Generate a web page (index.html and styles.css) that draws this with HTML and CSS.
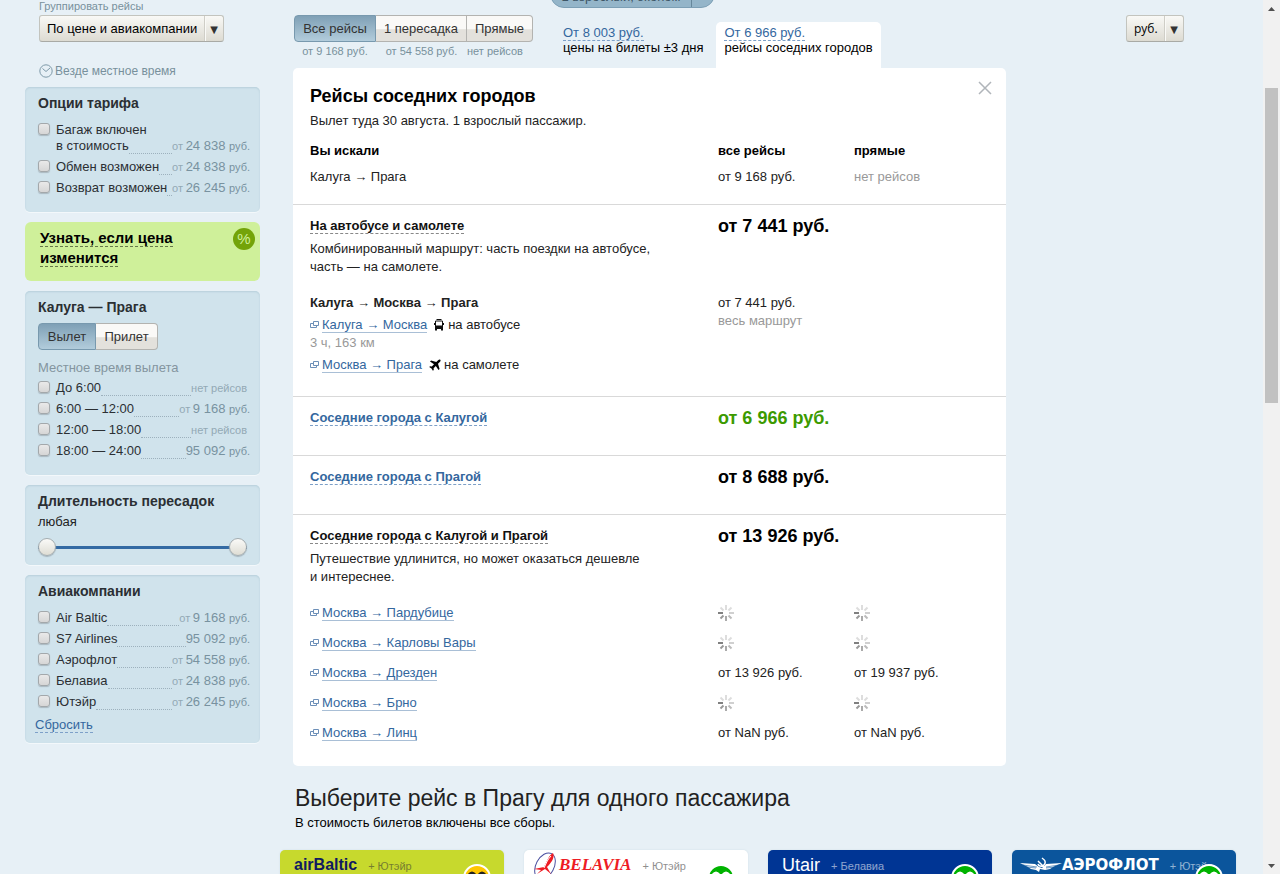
FILE: index.html
```html
<!DOCTYPE html>
<html lang="ru">
<head>
<meta charset="utf-8">
<title>Рейсы Калуга — Прага</title>
<link rel="stylesheet" href="styles.css">
</head>
<body>
<svg class="defs" aria-hidden="true">
  <symbol id="popup" viewBox="0 0 9 7"><path d="M3.5.5h5v4h-5zM3.5 2.5h-3v4h6v-2" fill="none" stroke="#6c8fb8"/></symbol>
  <symbol id="wait" viewBox="0 0 16 16"><g stroke-width="2" fill="none">
    <path d="M0 8h5" stroke="#808080"/><path d="M5.5 10.5 2.5 13.500" stroke="#999"/><path d="M8 11v5" stroke="#aaa"/><path d="m10.500 10.500 3 3" stroke="#bbb"/>
    <path d="M11 8h5" stroke="#d0d0d0"/><path d="m10.500 5.500 3-3" stroke="#ddd"/><path d="M8 5V0" stroke="#ddd"/><path d="m5.500 5.500-3-3" stroke="#ddd"/></g></symbol>
  <symbol id="smile" viewBox="0 0 28 28"><circle cx="14" cy="14" r="13" fill="currentColor" stroke="#fff" stroke-width="2"/><path class="eyes" d="M6 11q3-4 6 0M16 11q3-4 6 0M7 16q7 8 14 0" fill="none" stroke-width="3"/></symbol>
</svg>
<div class="window">
  <div class="page">
    <aside class="sidebar">
      <label class="group-label" for="group">Группировать рейсы</label>
      <span class="drop group-drop"><select id="group"><option>По цене и авиакомпании</option></select><i>▼</i></span>
      <div class="local"><svg width="14" height="14" viewBox="0 0 14 14" fill="none" stroke="#7d99a8"><circle cx="7" cy="7" r="6.200"/><path d="m3.500 4.500 3.500 3 4-3.500"/></svg>Везде местное время</div>

      <section class="box">
        <h3>Опции тарифа</h3>
        <div class="rows">
          <label class="row two-line"><input type="checkbox"><span class="line1">Багаж включен</span><span class="line2">в стоимость</span><b></b><span class="sum"><small>от</small> 24 838 <em>руб.</em></span></label>
          <label class="row"><input type="checkbox"><span>Обмен возможен</span><b></b><span class="sum"><small>от</small> 24 838 <em>руб.</em></span></label>
          <label class="row"><input type="checkbox"><span>Возврат возможен</span><b></b><span class="sum"><small>от</small> 26 245 <em>руб.</em></span></label>
        </div>
      </section>

      <section class="notify"><span><a href="#">Узнать, если цена<br>изменится</a></span><span class="percent">%</span></section>

      <section class="box">
        <h3>Калуга — Прага</h3>
        <div class="seg seg-time"><button type="button" class="on">Вылет</button><button type="button">Прилет</button></div>
        <p class="hint">Местное время вылета</p>
        <div class="rows rows-tight">
          <label class="row"><input type="checkbox"><span>До 6:00</span><b></b><span class="none">нет рейсов</span></label>
          <label class="row"><input type="checkbox"><span>6:00 — 12:00</span><b></b><span class="sum"><small>от</small> 9 168 <em>руб.</em></span></label>
          <label class="row"><input type="checkbox"><span>12:00 — 18:00</span><b></b><span class="none">нет рейсов</span></label>
          <label class="row"><input type="checkbox"><span>18:00 — 24:00</span><b></b><span class="sum">95 092 <em>руб.</em></span></label>
        </div>
      </section>

      <section class="box box-range">
        <h3>Длительность пересадок</h3>
        <p class="any">любая</p>
        <div class="range">
          <input type="range" min="0" max="24" value="0" aria-label="Длительность от">
          <input type="range" min="0" max="24" value="24" aria-label="Длительность до">
        </div>
      </section>

      <section class="box box-air">
        <h3>Авиакомпании</h3>
        <div class="rows">
          <label class="row"><input type="checkbox"><span>Air Baltic</span><b></b><span class="sum"><small>от</small> 9 168 <em>руб.</em></span></label>
          <label class="row"><input type="checkbox"><span>S7 Airlines</span><b></b><span class="sum">95 092 <em>руб.</em></span></label>
          <label class="row"><input type="checkbox"><span>Аэрофлот</span><b></b><span class="sum"><small>от</small> 54 558 <em>руб.</em></span></label>
          <label class="row"><input type="checkbox"><span>Белавиа</span><b></b><span class="sum"><small>от</small> 24 838 <em>руб.</em></span></label>
          <label class="row"><input type="checkbox"><span>Ютэйр</span><b></b><span class="sum"><small>от</small> 26 245 <em>руб.</em></span></label>
        </div>
        <div class="reset"><a class="dash" href="#">Сбросить</a></div>
      </section>
    </aside>

    <main class="main">
      <button type="button" class="pill"><span>1 взрослый, эконом</span><i></i></button>
      <div class="top">
        <div class="stops">
          <div class="seg"><button type="button" class="on">Все рейсы</button><button type="button">1 пересадка</button><button type="button">Прямые</button></div>
          <div class="captions"><span>от 9 168 руб.</span><span>от 54 558 руб.</span><span>нет рейсов</span></div>
        </div>
        <nav class="tabs">
          <div class="tab"><a class="dash" href="#">От 8 003 руб.</a><br>цены на билеты ±3 дня</div>
          <div class="tab active"><a class="dash" href="#">От 6 966 руб.</a><br>рейсы соседних городов</div>
        </nav>
        <span class="drop currency"><select aria-label="Валюта"><option>руб.</option></select><i>▼</i></span>
      </div>

      <div class="panel">
        <button type="button" class="close" aria-label="Закрыть"><svg width="14" height="14" viewBox="0 0 14 14"><path d="m1 1 12 12M13 1 1 13" stroke="#b0b5ba" stroke-width="1.500"/></svg></button>
        <section class="part first">
          <h2>Рейсы соседних городов</h2>
          <p>Вылет туда 30 августа. 1 взрослый пассажир.</p>
          <table class="searched">
            <tr><th>Вы искали</th><th class="c2">все рейсы</th><th class="c3">прямые</th></tr>
            <tr><td>Калуга → Прага</td><td>от 9 168 руб.</td><td class="muted">нет рейсов</td></tr>
          </table>
        </section>
        <section class="part combined">
          <div class="cols">
            <div><h4><a class="dash" href="#">На автобусе и самолете</a></h4>
              <p class="desc">Комбинированный маршрут: часть поездки на автобусе,<br>часть — на самолете.</p></div>
            <strong class="price">от 7 441 руб.</strong>
          </div>
          <div class="cols legs">
            <div>
              <h4>Калуга → Москва → Прага</h4>
              <div class="leg"><a class="route" href="#"><svg><use href="#popup"/></svg><span>Калуга → Москва</span></a><svg class="bus" viewBox="0 0 10 12"><path d="M2.500.5h5M1.500 2h7v7.500h-7zM1.500 7h7" fill="none" stroke="#111"/><path d="M0 4h1v2H0zM9 4h1v2H9zM1 7h8v3H1zM1 10h2v1.500H1zM7 10h2v1.500H7z" fill="#111"/></svg>на автобусе</div>
              <div class="muted">3 ч, 163 км</div>
              <div class="leg second"><a class="route" href="#"><svg><use href="#popup"/></svg><span>Москва → Прага</span></a><svg class="plane" viewBox="0 0 12 12"><path d="M11.300.7c.6.600.2 1.500-.5 2.200L9 4.700l1.600 5.200-1.100 1.100-2.700-4-2.200 2.200.2 1.700-.9.900-1.400-2.300L.2 8.100l.9-.9 1.700.2L5 5.200 1 2.500l1.100-1.100L7.300 3l1.800-1.800c.7-.7 1.600-1.100 2.200-.5z"/></svg>на самолете</div>
            </div>
            <div>от 7 441 руб.<br><span class="muted">весь маршрут</span></div>
          </div>
        </section>
        <section class="part short cols"><h4><a class="dash" href="#">Соседние города с Калугой</a></h4><strong class="price best">от 6 966 руб.</strong></section>
        <section class="part short cols"><h4><a class="dash" href="#">Соседние города с Прагой</a></h4><strong class="price">от 8 688 руб.</strong></section>
        <section class="part last">
          <div class="cols">
            <div><h4><a class="dash" href="#">Соседние города с Калугой и Прагой</a></h4>
              <p class="desc">Путешествие удлинится, но может оказаться дешевле<br>и интереснее.</p></div>
            <strong class="price">от 13 926 руб.</strong>
          </div>
          <table class="near">
            <tr><td><a class="route" href="#"><svg><use href="#popup"/></svg><span>Москва → Пардубице</span></a></td><td class="c2"><svg class="wait"><use href="#wait"/></svg></td><td class="c3"><svg class="wait"><use href="#wait"/></svg></td></tr>
            <tr><td><a class="route" href="#"><svg><use href="#popup"/></svg><span>Москва → Карловы Вары</span></a></td><td><svg class="wait"><use href="#wait"/></svg></td><td><svg class="wait"><use href="#wait"/></svg></td></tr>
            <tr><td><a class="route" href="#"><svg><use href="#popup"/></svg><span>Москва → Дрезден</span></a></td><td>от 13 926 руб.</td><td>от 19 937 руб.</td></tr>
            <tr><td><a class="route" href="#"><svg><use href="#popup"/></svg><span>Москва → Брно</span></a></td><td><svg class="wait"><use href="#wait"/></svg></td><td><svg class="wait"><use href="#wait"/></svg></td></tr>
            <tr><td><a class="route" href="#"><svg><use href="#popup"/></svg><span>Москва → Линц</span></a></td><td>от NaN руб.</td><td>от NaN руб.</td></tr>
          </table>
        </section>
      </div>

      <header class="choose">
        <h1>Выберите рейс в Прагу для одного пассажира</h1>
        <p>В стоимость билетов включены все сборы.</p>
      </header>

      <div class="cards">
        <article class="card baltic"><span class="logo">airBaltic</span><span class="plus">+ Ютэйр</span><svg class="face"><use href="#smile"/></svg></article>
        <article class="card belavia"><svg class="bird" viewBox="0 0 24 28"><ellipse cx="12" cy="14" rx="9" ry="14" transform="rotate(28 12 14)" fill="none" stroke="#4a4fa0"/><path d="M20 1c-4 2-6 8-9 14L1 17l7 1-4 4 8-5 6 5-4-7c5-5 8-10 6-14z" fill="#ee1c24"/><path d="M18 4c-4 4-5 8-7 12" stroke="#fff" fill="none"/></svg><span class="logo">BELAVIA</span><span class="plus">+ Ютэйр</span><svg class="face"><use href="#smile"/></svg></article>
        <article class="card utair"><span class="logo">Utair</span><span class="plus">+ Белавиа</span><svg class="face"><use href="#smile"/></svg></article>
        <article class="card aeroflot"><svg class="wings" viewBox="0 0 42 16" fill="#fff"><path d="M0 6l15 1 4 3 3 1 4-4 16-1-7 3-2 1-3 2-5 1-5-1-1 3-3-2-5-1-3-2-4-2z"/><path d="M3 8l14 2M6 10l10 1M39 8l-13 2M36 10l-10 1" stroke="#0b559c" stroke-width=".6"/><path d="M22 1q6 4 1 8-4 1-5-2m0-3 7 7" fill="none" stroke="#fff" stroke-width="1.500"/></svg><span class="logo">АЭРОФЛОТ</span><span class="plus">+ Ютэйр</span><svg class="face"><use href="#smile"/></svg></article>
      </div>
    </main>
  </div>
  <div class="scroll" aria-hidden="true">
    <svg width="17" height="17"><path d="M5 11h7L8.500 7z" fill="#505050"/></svg>
    <div class="thumb"></div>
    <svg width="17" height="17"><path d="M5 7h7L8.500 11z" fill="#505050"/></svg>
  </div>
</div>
</body>
</html>
```
FILE: styles.css
```css
* { box-sizing: border-box; }
body { margin: 0; background: #e7f0f6; color: #222; font: 13px/18px "Liberation Sans", Arial, sans-serif; }
h1, h2, h3, h4, p { margin: 0; }
button, select, input { font: inherit; color: inherit; margin: 0; }
a { color: #34679e; text-decoration: none; }
.defs { display: none; }
.window { display: flex; height: 100vh; overflow: hidden; }
.page { flex: 1; min-width: 0; display: flex; gap: 20px; padding: 0 27px 0 25px; }
.scroll { width: 17px; background: #f1f1f1; display: flex; flex-direction: column; }
.thumb { width: 13px; height: 36%; margin: 71px 2px auto; background: #c1c1c1; }

/* Sidebar */
.sidebar { flex: 0 0 235px; display: flex; flex-direction: column; gap: 10px; align-items: stretch; }
.group-label { font-size: 11px; line-height: 13px; color: #78909c; margin: 0 0 -8px 14px; }
.drop { display: inline-flex; position: relative; height: 27px; border: 1px solid #c3c4be; border-bottom-color: #a9aaa5; border-radius: 3px; background: linear-gradient(#f9f9f6, #dddbd2); color: #000; }
.drop select { appearance: none; border: 0; background: none; padding: 0 20px 0 7px; width: 100%; }
.drop i { position: absolute; right: 0; top: 0; bottom: 0; width: 19px; border-left: 1px solid #cfcec7; box-shadow: inset 1px 0 #fafaf7; font: 10px/27px "DejaVu Sans", sans-serif; text-align: center; color: #333; pointer-events: none; }
.group-drop { align-self: flex-start; margin-left: 14px; width: 185px; }
.local { display: flex; align-items: center; gap: 2px; margin: 10px 0 -3px 14px; font-size: 12px; color: #78909c; }
.box { background: #d0e3ec; border-radius: 5px; box-shadow: inset 0 1px 2px #b7cfdb, 0 1px #f3f8fb; padding: 7px 10px 16px 13px; }
.box h3 { font-size: 14px; line-height: 18px; color: #2b2f33; }
.rows { display: flex; flex-direction: column; gap: 5px; margin-top: 10px; }
.rows-tight { margin-top: 4px; }
.row { display: flex; align-items: flex-end; line-height: 16px; color: #2b2f33; white-space: nowrap; }
.row input { appearance: none; align-self: flex-start; width: 12px; height: 12px; margin: 1px 6px 0 0; flex: none; border: 1px solid #a3a8ab; border-radius: 3px; background: linear-gradient(#e9e9e9, #d6d6d6); box-shadow: 0 1px 1px #aab9c1; }
.row b { flex: 1; border-bottom: 1px dotted #9db1bd; }
.two-line { flex-wrap: wrap; }
.line1 { flex: 0 0 calc(100% - 18px); }
.line2 { margin-left: 18px; }
.sum { color: #7892a0; }
.sum small { font-size: 11px; color: #93a9b5; margin-right: -1px; }
.sum em { font-size: 11px; font-style: normal; }
.none { font-size: 11px; color: #93a9b5; margin-right: 3px; }
.notify { display: flex; justify-content: space-between; align-items: flex-start; background: #cff09a; border-radius: 6px; padding: 6px 5px 13px 15px; font-size: 15px; font-weight: bold; line-height: 20px; }
.notify a { color: #000; border-bottom: 1px dashed #64774a; }
.percent { flex: none; width: 22px; height: 22px; border-radius: 50%; background: #73a309; color: #cff09a; font-weight: normal; text-align: center; line-height: 22px; }
.seg { display: grid; grid-template-columns: 82px 91px 66px; height: 27px; }
.seg button { padding: 0; border: 1px solid #b3b3b0; border-left-width: 0; background: linear-gradient(#faf9f7 50%, #e3e1dc 55%); color: #333; }
.seg button:last-child { border-radius: 0 4px 4px 0; }
.seg .on { border: 1px solid #7899ae; border-radius: 4px 0 0 4px; background: linear-gradient(#7fa0b6, #b2ccdb); }
.seg-time { grid-template-columns: 58px 62px; margin-top: 7px; }
.hint { color: #84959f; line-height: 16px; margin-top: 10px; }
.box-range { padding-bottom: 9px; }
.any { line-height: 16px; margin-top: 4px; }
.range { display: grid; margin: 8px 3px 0 0; height: 18px; background: linear-gradient(#336aa3, #336aa3) center / 100% 3px no-repeat; }
.range input { grid-area: 1 / 1; appearance: none; width: 100%; height: 18px; background: none; pointer-events: none; }
.range input::-webkit-slider-thumb { appearance: none; width: 18px; height: 18px; border: 1px solid #a5adb0; border-radius: 50%; background: linear-gradient(#fafaf8, #deddd4); box-shadow: 0 1px 1px #a5b5bd; pointer-events: auto; }
.box-air { padding-bottom: 10px; }
.reset { line-height: 16px; margin: 7px 0 0 -3px; }
.dash { border-bottom: 1px dashed #7da0c8; }

/* Main column */
.main { flex: 1; min-width: 0; position: relative; }
.pill { position: absolute; left: 270px; top: -20px; display: flex; width: 165px; height: 28px; padding: 0; border: 1px solid #7c9fb5; border-radius: 14px; background: #94b5c9; color: #3e5666; line-height: 32px; }
.pill span { flex: 1; }
.pill i { width: 23px; height: 26px; border-left: 1px solid #66879b; }
.top { display: flex; align-items: flex-start; height: 68px; padding: 15px 52px 0 14px; }
.captions { display: grid; grid-template-columns: 82px 91px 66px; text-align: center; font-size: 11px; line-height: 18px; color: #78909c; }
.captions span:last-child { text-align: left; }
.tabs { display: flex; gap: 5px; margin: 7px 0 0 22px; line-height: 15px; color: #000; white-space: nowrap; }
.tab { padding: 3px 8px 0; height: 46px; border-radius: 5px 5px 0 0; }
.active { background: #fff; }
.currency { margin-left: auto; width: 58px; }
.currency select { font-family: "Open Sans", sans-serif; font-size: 12px; }
.panel { position: relative; max-width: 713px; margin-left: 13px; background: #fff; border-radius: 5px; }
.close { position: absolute; right: 14px; top: 12px; border: 0; padding: 0; background: none; width: 15px; height: 15px; line-height: 0; }
.part { padding: 11px 0 0 17px; border-bottom: 1px solid #d9d9d9; }
.first { padding: 18px 0 18px 17px; }
h2 { font-size: 18px; line-height: 20px; color: #000; margin-bottom: 6px; }
h4 { font-size: 13px; line-height: 20px; }
table { width: 100%; border-collapse: collapse; table-layout: fixed; }
th { text-align: left; color: #000; }
th, td { padding: 0; }
.searched { margin-top: 12px; }
.searched td { padding-top: 8px; }
.c2 { width: 136px; }
.c3 { width: 152px; }
.muted { color: #999; }
.cols { display: grid; grid-template-columns: 1fr 288px; }
.price { font-size: 18px; line-height: 20px; color: #000; }
.best { color: #3c9a00; }
.desc { margin-top: 4px; }
.part h4 a { color: #111; border-color: #888; }
.short h4 a { color: #34679e; border-color: #7da0c8; }
.short { padding-bottom: 27px; }
.combined { padding-bottom: 22px; }
.legs { margin-top: 18px; }
.legs h4 { line-height: 18px; }
.legs .leg { display: flex; align-items: center; margin-top: 4px; }
.route { display: flex; width: max-content; align-items: center; gap: 3px; }
.route svg { width: 9px; height: 7px; margin-bottom: 2px; }
.route span { line-height: 15px; border-bottom: 1px solid #a9bfd6; }
.bus { width: 10px; height: 12px; margin: 0 4px 0 7px; }
.plane { width: 12px; height: 12px; margin: 0 3px 0 7px; }
.last { padding-bottom: 18px; border: 0; }
.near { margin-top: 12px; }
.near td { height: 30px; vertical-align: middle; }
.wait { display: block; width: 16px; height: 16px; }
.choose { padding: 18px 15px; color: #000; }
h1 { font-size: 23px; font-weight: normal; line-height: 28px; color: #222; }
.choose p { margin-top: 2px; }
.cards { display: grid; grid-template-columns: repeat(4, 1fr); gap: 20px; }
.card { position: relative; display: flex; height: 120px; border-radius: 5px; padding: 5px 0 0 14px; color: #fff; white-space: nowrap; overflow: hidden; box-shadow: 0 0 2px #cfdde6; }
.logo { line-height: 20px; }
.plus { font-size: 11px; line-height: 22px; margin-left: 11px; opacity: .55; }
.face { position: absolute; right: 13px; top: 14px; width: 28px; height: 28px; color: #00b300; stroke: #fff; }
.baltic { background: #c7d92d; color: #111b60; }
.baltic .logo { font-size: 16px; font-weight: bold; }
.baltic .plus, .belavia .plus { color: #333; }
.baltic .face { color: #ffc600; stroke: #222; }
.belavia { background: #fff; padding-left: 9px; }
.bird { width: 24px; height: 28px; margin: -3px 2px 0 0; }
.belavia .logo { font: italic bold 17px/20px "Liberation Serif", serif; color: #ee1c24; }
.utair { background: #003594; }
.utair .logo { font-size: 18px; }
.aeroflot { background: #0b559c; padding-left: 8px; }
.wings { width: 42px; height: 16px; margin-top: 2px; }
.aeroflot .logo { font: bold 15px/20px "DejaVu Sans", sans-serif; }
```
